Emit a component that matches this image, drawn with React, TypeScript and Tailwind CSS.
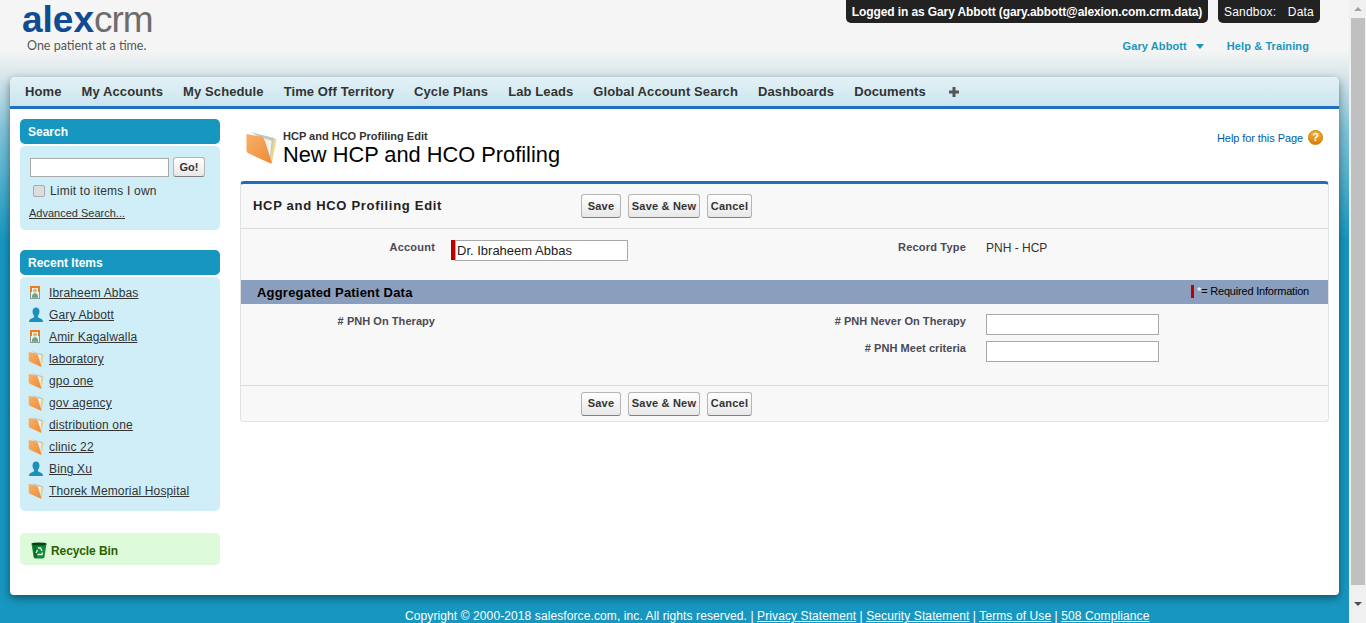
import React from "react";

const FolderIcon = ({ size = 16, id = "f" }: { size?: number; id?: string }) => (
  <svg width={size} height={size} viewBox="0 0 32 33" className="shrink-0">
    <defs>
      <linearGradient id={id} x1="0" y1="0" x2="1" y2="1">
        <stop offset="0" stopColor="#f7b267" />
        <stop offset="1" stopColor="#ee8a35" />
      </linearGradient>
    </defs>
    <path d="M5 0 L29 6 L31 8 L27 31 L20 8 Z" fill="#c4c4c0" />
    <path d="M9 3 L27 9 L25 29 L20 9 Z" fill="#f1f1ed" />
    <path d="M29 7 L32 7 L27 33 L25 32 Z" fill="#ecd88d" />
    <path d="M1 2 L17 5 Q19 6 20 9 L27 31 Q27 33 25 32 L3 22 Q1 21 1 19 Z" fill={`url(#${id})`} />
  </svg>
);

const PersonIcon = () => (
  <svg width="16" height="16" viewBox="0 0 16 16" className="shrink-0">
    <path d="M4.5 4.5 C4.5 2 6 0.5 8 0.5 C10 0.5 11.5 2 11.5 4.5 C11.5 7 10.2 8 9.8 9.5 C9.8 10.5 11.5 11 13 11.8 C14.3 12.5 15 13.5 15 15 L1 15 C1 13.5 1.7 12.5 3 11.8 C4.5 11 6.2 10.5 6.2 9.5 C5.8 8 4.5 7 4.5 4.5 Z" fill="#1d8fbd" />
  </svg>
);

const ContactIcon = () => (
  <svg width="16" height="16" viewBox="0 0 16 16" className="shrink-0">
    <rect x="2.5" y="1.5" width="9" height="12" fill="#eef2e4" stroke="#8f9a94" />
    <rect x="2" y="1" width="10" height="2" fill="#ee7a1c" />
    <rect x="2" y="1" width="2" height="6" fill="#ee7a1c" />
    <rect x="10" y="1" width="2" height="6" fill="#ee7a1c" />
    <circle cx="7" cy="5.5" r="2" fill="#e6b27a" />
    <path d="M4 11.5 C4 9.5 5.2 8.2 7 8.2 C8.8 8.2 10 9.5 10 11.5 Z" fill="#58ad8a" />
    <rect x="4" y="11.5" width="6" height="1" fill="#2f6d57" />
  </svg>
);

const RecycleIcon = () => (
  <svg width="16" height="17" viewBox="0 0 16 17" className="shrink-0">
    <path d="M0.5 1.5 L15.5 1.5 L13.5 15 Q13 16.5 11 16.5 L5 16.5 Q3 16.5 2.5 15 Z" fill="#128a35" />
    <ellipse cx="8" cy="2" rx="7.5" ry="1.6" fill="#06431a" />
    <path d="M2 3 L5 3 L6 16 L3.5 15.5 Z" fill="#0a6a28" />
    <path d="M7 6 L9.5 6 L11 9 M5 11 L6.5 8 M6.5 12.5 L11 12.5 L11.5 10.5" fill="none" stroke="#d9eedd" strokeWidth="1.4" />
  </svg>
);

const HelpIcon = () => (
  <div className="w-[15px] h-[15px] rounded-full bg-gradient-to-b from-[#f5b02e] to-[#d97f06] border border-[#c77c08] flex items-center justify-center text-white text-[11px] font-bold leading-none">
    ?
  </div>
);

const navItems = ["Home", "My Accounts", "My Schedule", "Time Off Territory", "Cycle Plans", "Lab Leads", "Global Account Search", "Dashboards", "Documents"];

const recentItems = [
  { name: "Ibraheem Abbas", type: "contact" },
  { name: "Gary Abbott", type: "person" },
  { name: "Amir Kagalwalla", type: "contact" },
  { name: "laboratory", type: "folder" },
  { name: "gpo one", type: "folder" },
  { name: "gov agency", type: "folder" },
  { name: "distribution one", type: "folder" },
  { name: "clinic 22", type: "folder" },
  { name: "Bing Xu", type: "person" },
  { name: "Thorek Memorial Hospital", type: "folder" },
];

const SfButton = ({ label, className }: { label: string; className: string }) => (
  <button className={`h-[24px] rounded-[3px] border border-[#b5b5b5] border-b-[#7f7f7f] bg-gradient-to-b from-white to-[#e8e8e8] text-[11px] font-bold tracking-[0.2px] text-[#333] ${className}`}>
    {label}
  </button>
);

const ButtonGroup = () => (
  <div className="flex gap-[7px]">
    <SfButton label="Save" className="w-[40px]" />
    <SfButton label="Save & New" className="w-[72px]" />
    <SfButton label="Cancel" className="w-[45px]" />
  </div>
);

const Sidebar = () => (
  <aside className="w-[200px] shrink-0 text-[12px] text-[#333]">
    <div className="h-[25px] rounded-[5px] bg-[#1797c0] pl-2 flex items-center text-[12px] font-bold text-white">Search</div>
    <div className="mt-[2px] h-[84px] rounded-[5px] bg-[#cfeef8] pl-[10px] pt-[11px]">
      <div className="flex items-center gap-1">
        <input className="w-[139px] h-[19px] bg-white border border-[#a9a9a9]" />
        <button className="w-[32px] h-[20px] rounded-[3px] border border-[#b5b5b5] border-b-[#7f7f7f] bg-gradient-to-b from-white to-[#e8e8e8] text-[11px] font-bold text-[#333]">Go!</button>
      </div>
      <div className="flex items-center gap-[5px] mt-[7px] ml-[3px] h-[14px]">
        <div className="w-[12px] h-[12px] rounded-[2px] border border-[#aaa] bg-[#dcdcdc]" />
        <span className="tracking-[0.2px]">Limit to items I own</span>
      </div>
      <a className="block mt-[7px] -ml-[1px] text-[11px] underline">Advanced Search...</a>
    </div>
    <div className="mt-[20px] h-[25px] rounded-[5px] bg-[#1797c0] pl-2 flex items-center text-[12px] font-bold text-white">Recent Items</div>
    <div className="mt-[2px] h-[234px] rounded-[5px] bg-[#cfeef8] pl-[8px] pt-[5px]">
      {recentItems.map((item, i) => (
        <div key={item.name} className="h-[22px] flex items-center gap-[5px]">
          {item.type === "contact" && <ContactIcon />}
          {item.type === "person" && <PersonIcon />}
          {item.type === "folder" && <FolderIcon id={`folder-${i}`} />}
          <a className="underline tracking-[0.15px]">{item.name}</a>
        </div>
      ))}
    </div>
    <div className="mt-[22px] h-[32px] rounded-[5px] bg-[#ddfbdb] pl-[11px] pt-[3px] flex items-center gap-[4px] text-[12px] font-bold tracking-[-0.1px] text-[#2b6100]">
      <RecycleIcon />
      <span>Recycle Bin</span>
    </div>
  </aside>
);

const EditBlock = () => (
  <div className="mt-[14px] rounded-[4px] border border-[#e0e3e5] border-t-[3px] border-t-[#1f6fbf] bg-[#f8f8f8]">
    <div className="h-[45px] flex items-center pl-3 border-b border-[#dbdbdb]">
      <h2 className="w-[328px] text-[13px] font-bold tracking-[0.7px] text-[#222]">HCP and HCO Profiling Edit</h2>
      <ButtonGroup />
    </div>
    <div className="h-[51px] flex text-[11px]">
      <div className="w-[194px] pt-[10px] text-right font-bold tracking-[0.2px] text-[#4a4a56]">Account</div>
      <div className="w-[531px] pl-4 pt-[11px] flex items-start">
        <div className="w-[4px] h-[20px] bg-[#b80000]" />
        <input defaultValue="Dr. Ibraheem Abbas" className="w-[173px] h-[21px] pl-[1px] bg-white border border-[#a9a9a9] text-[13px] text-[#222]" />
        <div className="ml-auto -mt-[1px] font-bold tracking-[0.2px] text-[#4a4a56]">Record Type</div>
      </div>
      <div className="pl-5 pt-[10px] text-[12px] text-[#333]">PNH - HCP</div>
    </div>
    <div className="h-[24px] flex items-center justify-between bg-[#8a9ebe] pl-4 pr-[19px]">
      <h3 className="pt-[2px] text-[13px] font-bold tracking-[0.2px] text-black">Aggregated Patient Data</h3>
      <div className="flex items-center pb-[2px] text-[11px] tracking-[-0.2px] text-black">
        <span className="w-[3px] h-[13px] bg-[#c00000] mr-[3px]" />
        <span className="text-white">*</span>
        <span>= Required Information</span>
      </div>
    </div>
    <div className="h-[82px] flex text-[11px] leading-[17px] font-bold tracking-[0.05px] text-[#4a4a56] border-b border-[#dbdbdb]">
      <div className="w-[194px] pt-[9px] text-right"># PNH On Therapy</div>
      <div className="w-[531px] pt-[9px] flex flex-col items-end gap-[10px]">
        <div># PNH Never On Therapy</div>
        <div># PNH Meet criteria</div>
      </div>
      <div className="pl-5 pt-[10px] flex flex-col gap-[6px]">
        <input className="w-[173px] h-[21px] bg-white border border-[#a9a9a9]" />
        <input className="w-[173px] h-[21px] bg-white border border-[#a9a9a9]" />
      </div>
    </div>
    <div className="h-[35px] flex items-center pl-[340px]">
      <ButtonGroup />
    </div>
  </div>
);

export default function App() {
  return (
    <div className="h-[623px] overflow-hidden flex font-['Liberation_Sans',Arial,sans-serif] bg-[#1797c0]">
      <div className="flex-1 min-w-0 flex flex-col bg-[linear-gradient(180deg,#f5f5f5_0px,#f5f5f5_50px,#d6e5ea_77px,#7fc3d8_130px,#1797c0_240px,#1797c0_100%)]">
        <header className="h-[77px] shrink-0 flex justify-between">
          <div className="pl-[22px] pt-[1px]">
            <div className="h-[37px] text-[37px] leading-[37px]">
              <span className="font-bold text-[#0f4c92]">alex</span>
              <span className="text-[#6c6c6c] tracking-[-1px]">crm</span>
            </div>
            <div className="pl-[5px] -mt-[1px] text-[12.5px] text-[#555] font-['Lato',sans-serif]">One patient at a time.</div>
          </div>
          <div className="flex flex-col items-end pr-[29px]">
            <div className="flex gap-[10px] text-[12px] text-white">
              <div className="h-[23px] w-[362px] rounded-b-[5px] bg-[#222] flex items-center justify-center font-bold tracking-[-0.1px]">Logged in as Gary Abbott (gary.abbott@alexion.com.crm.data)</div>
              <div className="h-[23px] w-[102px] rounded-b-[5px] bg-[#222] flex items-center justify-between px-[6px] tracking-[0.2px]">
                <span>Sandbox:</span>
                <span>Data</span>
              </div>
            </div>
            <div className="flex items-center mt-[15px] pr-[11px] text-[11px] font-bold tracking-[0.1px] text-[#1797c0]">
              <span>Gary Abbott</span>
              <span className="ml-[9px] w-0 h-0 border-x-[4px] border-x-transparent border-t-[5px] border-t-[#1797c0]" />
              <span className="ml-[23px]">Help &amp; Training</span>
            </div>
          </div>
        </header>

        <div className="mx-[10px] h-[518px] shrink-0 rounded-t-[5px] rounded-b-[4px] bg-white shadow-[0_3px_8px_rgba(0,0,0,0.45)] flex flex-col">
          <nav className="h-[32px] shrink-0 rounded-t-[5px] border-b-[3px] border-[#1f6fbf] bg-gradient-to-b from-[#e2f1f6] to-[#cbe5ee] pl-[15px] pt-[1px] flex items-center gap-5 text-[13px] font-bold tracking-[0.1px] text-[#333]">
            {navItems.map((n) => (
              <span key={n}>{n}</span>
            ))}
            <svg width="10" height="10" viewBox="0 0 10 10" className="ml-[3px]">
              <path d="M3.5 0 H6.5 V3.5 H10 V6.5 H6.5 V10 H3.5 V6.5 H0 V3.5 H3.5 Z" fill="#555" />
            </svg>
          </nav>
          <div className="flex-1 flex pl-[10px] pr-[10px] pt-[10px] gap-5">
            <Sidebar />
            <main className="flex-1 min-w-0">
              <div className="flex justify-between">
                <div className="flex pt-[13px] pl-[5px]">
                  <FolderIcon size={32} id="folder-main" />
                  <div className="pl-[6px] -mt-[3px]">
                    <div className="text-[11px] font-bold leading-[14px] text-[#333]">HCP and HCO Profiling Edit</div>
                    <h1 className="text-[21.8px] leading-[24px] text-black">New HCP and HCO Profiling</h1>
                  </div>
                </div>
                <div className="flex items-center h-[15px] mt-[11px] pr-[6px] gap-[5px] text-[11px] text-[#015ba7]">
                  <span className="pt-[2px] tracking-[-0.08px]">Help for this Page</span>
                  <HelpIcon />
                </div>
              </div>
              <EditBlock />
            </main>
          </div>
        </div>

        <footer className="pl-[405px] pt-[14px] text-[12px] leading-[15px] tracking-[0.1px] whitespace-nowrap text-white">
          Copyright © 2000-2018 salesforce.com, inc. All rights reserved. | <a className="underline">Privacy Statement</a> | <a className="underline">Security Statement</a> | <a className="underline">Terms of Use</a> | <a className="underline">508 Compliance</a>
        </footer>
      </div>

      <div className="w-[17px] shrink-0 bg-[#f0f0f0] flex flex-col items-center">
        <div className="h-[18px] shrink-0 flex items-center justify-center">
          <span className="w-0 h-0 border-x-[4px] border-x-transparent border-b-[4px] border-b-[#a3a3a3]" />
        </div>
        <div className="w-[14px] h-[567px] shrink-0 bg-[#c0c0c0]" />
        <div className="flex-1 flex items-center justify-center">
          <span className="w-0 h-0 border-x-[4px] border-x-transparent border-t-[4px] border-t-[#505050]" />
        </div>
      </div>
    </div>
  );
}
